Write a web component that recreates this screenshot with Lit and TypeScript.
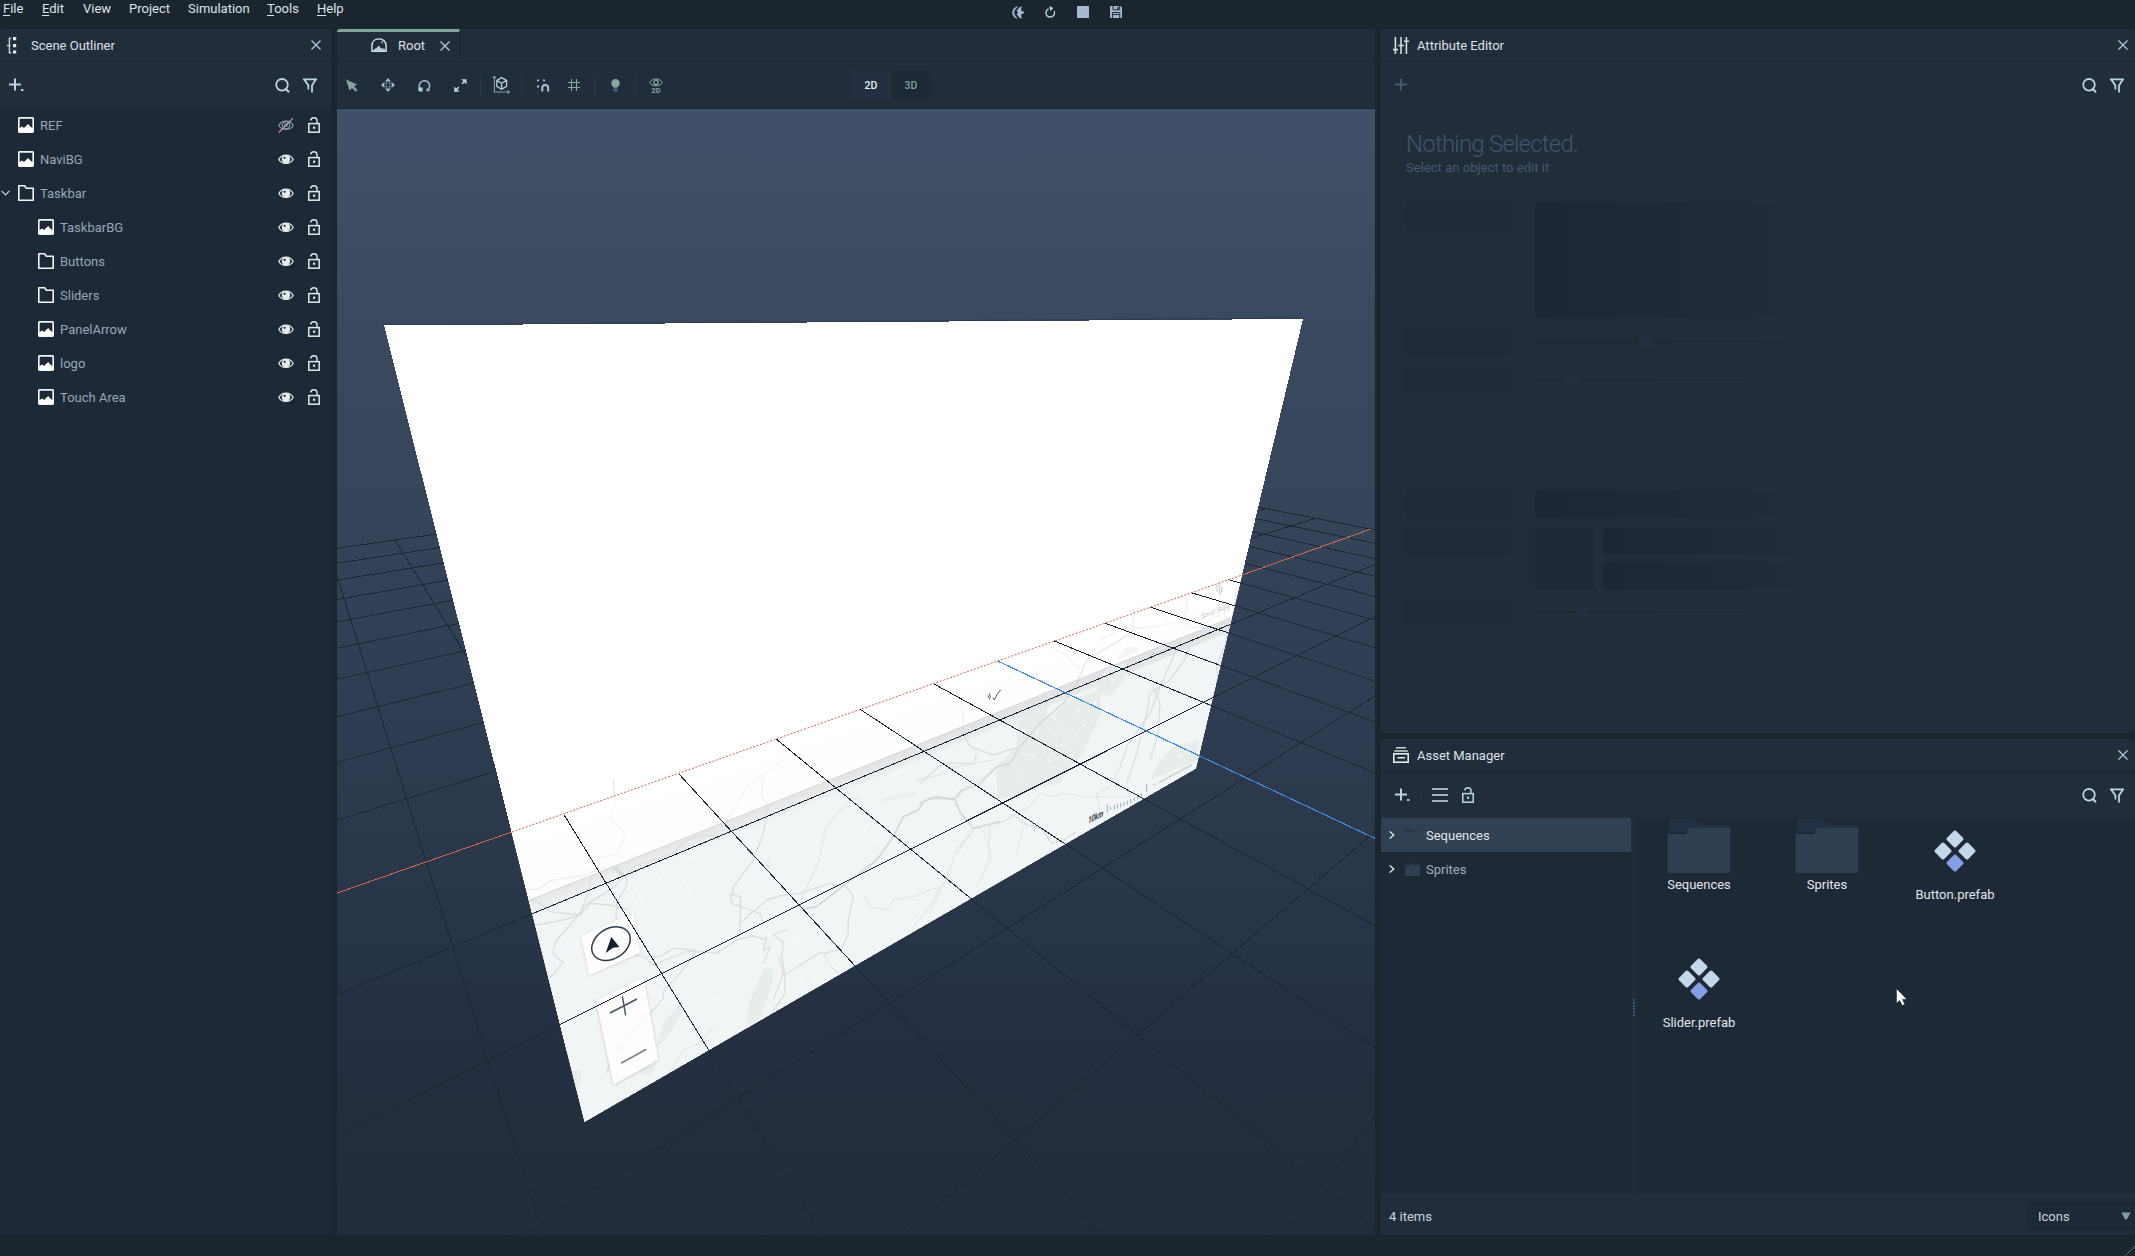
import { LitElement, html, svg, css, nothing } from "lit";
import { customElement, property } from "lit/decorators.js";

/* ---------- icons ---------- */

const icon = (w: number, h: number, body: unknown, box = `0 0 ${w} ${h}`) =>
  html`<svg class="ico" width=${w} height=${h} viewBox=${box} fill="none">${body}</svg>`;

const closeIcon = () =>
  icon(10, 10, svg`<path d="M.5 .5 9.5 9.5M9.5 .5 .5 9.5" stroke="#b3c4dc" stroke-width="1.3"/>`);

const searchIcon = () =>
  icon(15, 15, svg`<circle cx="7" cy="6.8" r="5.8" stroke="#bcd4e6" stroke-width="1.8"/>
    <path d="M10.2 10.2 14 14.2" stroke="#bcd4e6" stroke-width="2"/>`);

const filterIcon = () =>
  icon(14, 15, svg`<path d="M0 1.3H14M1.2 1.5 5.4 7.4V11.5M12.8 1.5 9 7.4V14.5" stroke="#bcd4e6" stroke-width="1.8"/>`);

const plusIcon = (color: string, dot: boolean) =>
  icon(15, 14, svg`<path d="M0 6.5H12M6 .5V12.5" stroke=${color} stroke-width="2"/>
    ${dot ? svg`<path d="M12 11h2.4v2H12z" fill=${color}/>` : nothing}`);

const imageIcon = () =>
  icon(16, 16, svg`<rect x=".8" y=".8" width="14.4" height="14.4" rx="1" stroke="#f2f6f4" stroke-width="1.7"/>
    <path d="M1 11.5 4 9.5 6 11 10.2 7 12.3 9.5 15 11.5V15H1z" fill="#fff"/>`);

const folderIcon = () =>
  icon(16, 16, svg`<path d="M.8 15.2V.8H6.6L8.4 3.3H15.2V15.2z" stroke="#f2f6f4" stroke-width="1.6" stroke-linejoin="round"/>`);

const eyeIcon = (off: boolean) => {
  const c = off ? "#8798b3" : "#e6ece9";
  return icon(16, 15, svg`<path d="M.8 7.5C3.5 1.7 12.5 1.7 15.2 7.5 12.5 12.6 3.5 12.6 .8 7.5Z" stroke=${c} stroke-width="1.2"/>
    <circle cx="8" cy="7.2" r="3.6" fill=${off ? "none" : c} stroke=${c} stroke-width="1.2"/>
    ${off
      ? svg`<circle cx="8" cy="7.2" r="1.4" stroke=${c}/><path d="M.8 14.4 14.8 .4" stroke="#cf9d92" stroke-width="1.3"/>`
      : svg`<circle cx="6.6" cy="5.8" r="1.1" fill="#1e2938"/>`}`);
};

const lockIcon = (color = "#dfeae5") =>
  icon(12, 16, svg`<rect x=".8" y="6.6" width="10.4" height="8.6" stroke=${color} stroke-width="1.5"/>
    <path d="M2.6 3.4C3 1.6 4.2 .8 6 .8 8 .8 9 1.9 9 3.6V6.4" stroke=${color} stroke-width="1.4"/>
    <rect x="5" y="9.6" width="2.2" height="2.2" fill=${color}/>`);

const chevronIcon = (dir: "down" | "right") =>
  dir === "down"
    ? icon(9, 6, svg`<path d="M.6 .8 4.5 4.8 8.4 .8" stroke="#c9dbe0" stroke-width="1.2"/>`)
    : icon(6, 8, svg`<path d="M.7 .4 4.8 4 .7 7.6" stroke="#dce8ea" stroke-width="1.3"/>`);

const outlinerIcon = () =>
  icon(10, 17, svg`<path d="M4.2 1.2H2.4V15.8H4.2M0 8.5H3.4" stroke="#c4d6cf" stroke-width="1.4"/>
    <path d="M6 0h3.2v3.2H6zM6 7h3.2v3.2H6zM6 13.4h3.2v3.2H6z" fill="#e3ebe8"/>`);

const slidersIcon = () =>
  icon(16, 17, svg`<path d="M2.4 0V17M8 0V17M13.4 0V17" stroke="#d3dfdc" stroke-width="1.6"/>
    <path d="M0 12.6H5M5.4 8.5H10.8M11 4.2H16" stroke="#d3dfdc" stroke-width="1.6"/>`);

const archiveIcon = () =>
  icon(16, 16, svg`<path d="M3 .8H13M1.2 4H14.8" stroke="#c9d9d2" stroke-width="1.5"/>
    <rect x=".8" y="6.8" width="14.4" height="8.4" stroke="#e3ece8" stroke-width="1.6"/>
    <path d="M4.4 10.8H12" stroke="#e3ece8" stroke-width="1.5"/>`);

const domeIcon = () =>
  icon(16, 15, svg`<path d="M.9 13.4V8C.9 3.6 4 .9 8 .9S15.1 3.6 15.1 8V13.4Z" stroke="#dce8ea" stroke-width="1.4" stroke-linejoin="round"/>
    <path d="M2 12.4 4 10.6 5.4 10 8 7.4 9.6 10 14 11V13.4H2z" fill="#b9c8e2"/>
    <circle cx="11" cy="4.3" r="1" fill="#a8c0bb"/>`);

const menuLinesIcon = () =>
  icon(16, 14, svg`<path d="M0 1H16M0 7H16M0 13H16" stroke="#cadce4" stroke-width="1.5"/>`);

const tools = {
  pointer: icon(12, 13, svg`<path d="M0 .6 11 5.4 8 7.4 11.6 11 9.6 12.8 6 9 3.6 11.6z" fill="#84a59c"/>`),
  move: icon(14, 14, svg`<path d="M7 0 10 3.4H4zM7 14 4 10.6H10zM0 7 3.4 4V10zM14 7 10.6 10V4z" fill="#9cc0d0"/>
    <path d="M4.6 4.6h1.6v1.6H4.6zM7.8 4.6h1.6v1.6H7.8zM4.6 7.8h1.6v1.6H4.6zM7.8 7.8h1.6v1.6H7.8z" fill="#8199bd"/>`),
  rotate: icon(13, 13, svg`<path d="M2.6 10.4A5.2 5.2 0 1 1 9.8 10.9" stroke="#9db9cf" stroke-width="1.6"/>
    <path d="M0 8.4H4.6V12.6H.8z" fill="#9fd0e0"/><path d="M8.4 9.8H11.4V12.2H8.4z" fill="#9db9cf"/>`),
  scale: icon(13, 13, svg`<path d="M12.6 .2V5.6L7.2 .2zM.2 7.4V12.8H5.6z" fill="#b4d4dc"/>
    <path d="M11.6 1.2 8 4.8M.9 12 4.8 8.1" stroke="#b4d4dc" stroke-width="1.6"/>`),
  space: icon(18, 18, svg`<path d="M2.4 0V16H17M.6 2 2.4 .4 4 2M15.6 14.4 17.4 16 15.6 17.6" stroke="#7f9f9c" stroke-width="1.1"/>
    <path d="M9.6 1.6 14.6 4.4V10.4L9.6 13.2 4.8 10.4V4.4zM4.8 4.4 9.6 7.2 14.6 4.4M9.6 7.2V13" stroke="#b6cfde" stroke-width="1.3"/>`),
  magnet: icon(13, 13, svg`<path d="M0 .4h2v1.8H0zM6 .4h2v1.8H6zM0 6.6h2v1.8H0z" fill="#b2c3e0"/>
    <path d="M5.3 12.4V8.8C5.3 6.9 6.4 5.9 8.2 5.9S11.2 6.9 11.2 8.8V12.4" stroke="#afc0da" stroke-width="2"/>`),
  grid: icon(12, 12, svg`<path d="M3.5 0V12M8.5 0V12M0 3.5H12M0 8.5H12" stroke="#86a6a2" stroke-width="1.1"/>`),
  bulb: icon(9, 13, svg`<circle cx="4.5" cy="4.3" r="4.2" fill="#84a8a0"/><path d="M2.6 8.4h3.8v.8H2.6z" fill="#84a8a0"/>
    <path d="M2.4 10H6.6V11.6L5.6 12.8H3.4L2.4 11.6z" fill="#41608c"/>`),
  eye2d: html`<span class="eye2d">${icon(14, 9, svg`<path d="M.7 4.5C3.2 -.2 10.8 -.2 13.3 4.5 10.8 8.9 3.2 8.9 .7 4.5Z" stroke="#86a6a2"/>
    <circle cx="7" cy="4.4" r="2.2" stroke="#86a6a2" stroke-width="1.2"/>`)}<b>2D</b></span>`,
};

/* ---------- viewport scene ---------- */

/** Ground plane cell (i, j) to screen pixels; w is the homogeneous depth. */
const depth = (i: number, j: number) => 1 + 0.06128 * i - 0.08345 * j;
const project = (i: number, j: number): string => {
  const w = depth(i, j);
  const x = (997.6 + 121.31 * i - 21.26 * j) / w;
  const y = (661 + 19.22 * i - 26.02 * j) / w;
  return `${x.toFixed(1)} ${y.toFixed(1)}`;
};
const NEAR = 0.1;
const HALF = 10;

function gridPath(jMin: number): string {
  const parts: string[] = [];
  for (let i = -HALF; i <= HALF; i++) {
    if (i === 0) continue;
    const jMax = Math.min(HALF, (1 + 0.06128 * i - NEAR) / 0.08345);
    if (jMax > jMin) parts.push(`M${project(i, jMin)}L${project(i, jMax)}`);
  }
  for (let j = Math.max(jMin, -HALF); j <= HALF; j++) {
    if (j === 0) continue;
    const iMin = Math.max(-HALF, (NEAR - 1 + 0.08345 * j) / 0.06128);
    parts.push(`M${project(iMin, j)}L${project(HALF, j)}`);
  }
  return parts.join("");
}

const PLANE = "384,325.5 1303,319 1196,768.5 584.5,1122";

@customElement("scene-view")
export class SceneView extends LitElement {
  static styles = css`
    :host { display: block; flex: 1; min-height: 0; overflow: hidden; }
    svg { display: block; width: 100%; height: 100%; }
    text { font-family: Roboto, "Liberation Sans", sans-serif; }
  `;

  render() {
    return html`<svg viewBox="337 109 1038 1126" preserveAspectRatio="xMinYMin slice" fill="none">
      <defs>
        <linearGradient id="sky" x1="0" y1="109" x2="0" y2="1235" gradientUnits="userSpaceOnUse">
          <stop offset="0" stop-color="#405068"/><stop offset=".17" stop-color="#3b4a60"/>
          <stop offset=".36" stop-color="#35455a"/><stop offset=".5" stop-color="#303e54"/>
          <stop offset=".68" stop-color="#2a374a"/><stop offset=".8" stop-color="#253043"/>
          <stop offset="1" stop-color="#212d3b"/>
        </linearGradient>
        <linearGradient id="fade" x1="0" y1="450" x2="0" y2="1235" gradientUnits="userSpaceOnUse">
          <stop offset="0" stop-color="#1b2733"/><stop offset=".6" stop-color="#1a2632" stop-opacity=".95"/>
          <stop offset="1" stop-color="#1a2531" stop-opacity=".65"/>
        </linearGradient>
        <linearGradient id="mist" x1="850" y1="700" x2="876" y2="775" gradientUnits="userSpaceOnUse">
          <stop offset="0" stop-color="#fff"/><stop offset="1" stop-color="#f9fbfb"/>
        </linearGradient>
        <linearGradient id="lip" x1="876" y1="762" x2="884" y2="783" gradientUnits="userSpaceOnUse">
          <stop offset="0" stop-color="#e1e3e4"/><stop offset=".5" stop-color="#ebeded"/><stop offset="1" stop-color="#f1f5f6"/>
        </linearGradient>
        <clipPath id="plane"><polygon points=${PLANE}/></clipPath>
        <clipPath id="front"><path d="M337 893 1371 529 1375 1235H337z"/></clipPath>
      </defs>
      <rect x="337" y="109" width="1038" height="1126" fill="url(#sky)"/>
      <path d=${gridPath(-HALF)} stroke="url(#fade)" stroke-width="1" shape-rendering="crispEdges"/>
      <path d="M337 893 512 832M1242 575 1371 529" stroke="#c8694f" stroke-width="1" shape-rendering="crispEdges"/>
      <path d="M383 325 1303 318" stroke="#2c3a50"/>
      <polygon points=${PLANE} fill="#fff" shape-rendering="crispEdges"/>
      <g clip-path="url(#plane)">
        <path d="M500 835 1260 568V610L500 912z" fill="url(#mist)"/>
        <path d="M500 912 880 760 1260 606V1150H500z" fill="#f1f5f6"/>
        <path d="M500 912 880 760 1260 606V619L880 776 500 928z" fill="url(#lip)"/>
        <g transform="translate(500 760) scale(.33333)" stroke="#dcdddd" stroke-width="4" stroke-linejoin="round">
          <g fill="#e6edec" stroke="none">
            <path d="M735 800 750 720 795 620 822 625 815 680 780 775z"/>
            <path d="M470 860 490 790 540 730 545 760 500 835z"/>
            <path d="M330 320 350 320 385 352 370 352z" fill="#d5dfdd"/>
            <path d="M215 930 245 930 240 975 225 985zM420 930 470 910 455 945 430 945z"/>
            <path d="M790 320 805 290 815 320 800 330zM1130 120 1240 95 1250 105 1150 125z" opacity=".7"/>
          </g>
          <g stroke="#f9fafa" stroke-width="6">
            <path d="M415 400 430 440M560 370 575 415M485 320 490 345M840 85 850 105M1160 60 1220 25M907 650 909 670M942 650 944 668M1100 190 1094 215M205 770 222 790M880 545 900 530M560 295 590 285M1110 245 1140 245M350 240 380 225M450 150 470 146M740 800 760 790M630 720 660 710"/>
          </g>
          <path d="M85 388 110 388 150 362 240 348 310 325 350 322 378 350 382 372 350 430 348 480"/>
          <path d="M85 418 120 430 150 455 240 465 270 430 330 435 385 450M110 495 190 480 240 465 250 440 345 380 400 320 520 280 560 240 600 228 640 225"/>
          <path d="M275 350 265 400 240 460 170 540 158 575 165 590 190 605 150 655"/>
          <path d="M340 60 345 130 332 180 360 200 375 228 345 285 300 290 295 330" opacity=".7"/>
          <path d="M385 580 430 590 460 615 520 590 560 575 600 575 650 580 710 540 760 528 800 540"/>
          <path d="M440 590 480 590 520 565 580 570 590 575 540 640 490 695 490 715 455 755 330 905 320 940"/>
          <path d="M785 110 805 140 790 220 760 300 700 380 697 405 722 410 720 520 715 530"/>
          <path d="M690 400 695 430 780 460 790 490"/>
          <path d="M720 490 800 420 850 405 900 400 990 370 1040 380 1060 410 1045 480 1045 520 1025 565 975 580 960 577 855 645"/>
          <path d="M900 450 950 440 1040 370 1130 300 1180 230 1210 170 1255 150 1270 125 1310 110 1365 120 1380 155 1420 205 1460 195 1500 185" stroke="#d5d6d6" stroke-width="5"/>
          <path d="M860 510 820 525 850 545 845 590 855 645 855 700 815 760M800 530 790 570 810 560 790 610M835 590 850 640 820 720"/>
          <path d="M975 580 980 605 1020 645M640 800 600 850 550 870 510 935M1090 400 1110 440 1165 450 1180 420 1240 410 1320 380 1290 440 1240 500" opacity=".6"/>
          <path d="M1075 110 1010 160 975 210 958 300 925 370 900 430M1410 220 1370 270 1340 350 1290 460M1450 210 1475 290 1430 380" opacity=".6"/>
          <path d="M850 0 740 80 700 150 670 190M790 50 785 110M1250 60 1320 45 1370 20 1480 0M1365 120 1400 80 1460 50 1490 20" opacity=".6"/>
        </g>
        <g transform="translate(920 500) scale(.33333)" stroke="#dcdddd" stroke-width="4" stroke-linejoin="round">
          <g fill="#e6edeb" stroke="none">
            <path d="M232 900 230 800 290 740 295 660 330 640 380 610 380 660 450 600 540 570 545 640 515 700 490 760 440 810 420 850 330 870z"/>
            <path d="M530 570 560 500 620 490 610 540 570 590zM590 480 620 440 660 440 650 455z"/>
            <path d="M690 840 720 780 760 740 835 720 835 780 760 810z"/>
          </g>
          <g stroke="#f2f6f6" stroke-width="7">
            <path d="M398 646 408 664M472 626 479 642M332 763 342 772M432 725 438 738M382 774 390 786M302 824 305 833M452 684 460 690M350 690 352 705M402 702 408 712M522 605 528 616M572 534 578 543M372 833 380 838M452 763 460 768M780 760 786 770M350 725 356 730M420 680 426 690M490 670 494 680M470 720 476 728M310 690 316 698"/>
          </g>
          <path d="M0 910 30 895 105 895 125 870 175 855 230 800 270 790 300 740 360 670 435 605 470 550 500 480 600 420 640 390" stroke="#d8d9d9" stroke-width="5"/>
          <path d="M105 895 120 940 160 985 250 965 280 945 320 975 365 985 395 1030 430 1020 470 995"/>
          <path d="M540 420 600 390 700 380 780 365 830 385 870 360 930 330M640 330 640 390 690 380M800 290 800 330 790 360" opacity=".8"/>
          <path d="M820 400 800 470 750 540 690 580 680 640 650 760 620 850M780 410 760 470 720 560 690 640 620 740 600 800M700 560 720 610 715 700 690 780"/>
          <path d="M910 300 920 420 890 500 895 560M950 260 940 330M130 640 130 700 150 740 220 765 300 740M170 760 160 790 70 790 0 850"/>
          <path d="M360 880 400 890 430 880 490 890 620 890M540 940 530 880 570 860 600 800M360 880 330 920 280 945M110 560 130 640M480 510 430 460 370 430M260 480 270 520" opacity=".6"/>
          <path d="M210 970 205 1080M310 980 290 1060 M160 990 110 1060" opacity=".6"/>
        </g>
        <path d="M500 835 1260 568V606L880 760 500 912z" fill="#fff" opacity=".5"/>
        <path d="M500 912 880 760 1260 606" stroke="#cfd1d1" stroke-width=".8"/>
        <g transform="translate(920 500) scale(.33333)">
          <path d="M203 586 210 598M208 580 212 592M219 593 223 600 231 583 242 570" stroke="#4f565c" stroke-width="3"/>
          <path d="M892 255 890 270M900 250 898 285M906 262 904 280M890 274 900 268" stroke="#a3adab" stroke-width="3" stroke-dasharray="5 3"/>
          <path d="M562 914 562 938M572 920V930M583 916V930M592 912V926M602 908V922M612 906V918M622 902V914M632 898V910M643 892V904M653 886V898M664 880V892M680 852V874" stroke="#9aabc4" stroke-width="3"/>
          <path d="M700 855 708 851M715 848 815 795" stroke="#9fb0ad" stroke-width="6" stroke-dasharray="3 2" opacity=".65"/>
          <text x="0" y="0" transform="matrix(1 -.5 -.12 1 503 972)" font-size="30" font-weight="700" fill="#3a4047" textLength="46" lengthAdjust="spacingAndGlyphs">10km</text>
          <text x="0" y="0" transform="matrix(1 -.4 -.12 1 842 358)" font-size="22" fill="#c3c8c8" textLength="88" lengthAdjust="spacingAndGlyphs">Sand Skog</text>
        </g>
        <g transform="translate(500 760) scale(.33333)">
          <path d="M243 528 402 458 421 578 268 645z" fill="#fdfdfd" style="filter:drop-shadow(0 2px 4px #0002)"/>
          <ellipse cx="0" cy="0" rx="62" ry="45" transform="translate(333 551) rotate(-32)" stroke="#2a3949" stroke-width="4.5"/>
          <path d="M334 531 358 561 339 563 317 579z" fill="#131e2c"/>
          <path d="M288 722 431 652 475 899 341 974z" fill="#fdfdfd" style="filter:drop-shadow(0 2px 4px #0003)"/>
          <path d="M330 759 411 717M367 709 377 766" stroke="#475563" stroke-width="4.5"/>
          <path d="M363 910 439 868" stroke="#7c8084" stroke-width="5"/>
          <path d="M340 890 440 760" stroke="#f0f1f1" stroke-width="3"/>
        </g>
        <g clip-path="url(#front)">
          <path d=${gridPath(0)} stroke="#172133" stroke-width="1" shape-rendering="crispEdges"/>
        </g>
      </g>
      <path d="M512 832 1242 575" stroke="#c8694f" stroke-width="1" stroke-dasharray="2 1.6"/>
      <path d="M${project(0, 0)}L${project(0, 4.2)}" stroke="#4688d8" stroke-width="1.2" shape-rendering="crispEdges"/>
    </svg>`;
  }
}

/* ---------- outliner ---------- */

interface Node { name: string; kind: "image" | "folder"; level: number; open?: boolean; hidden?: boolean }

const NODES: Node[] = [
  { name: "REF", kind: "image", level: 0, hidden: true },
  { name: "NaviBG", kind: "image", level: 0 },
  { name: "Taskbar", kind: "folder", level: 0, open: true },
  { name: "TaskbarBG", kind: "image", level: 1 },
  { name: "Buttons", kind: "folder", level: 1 },
  { name: "Sliders", kind: "folder", level: 1 },
  { name: "PanelArrow", kind: "image", level: 1 },
  { name: "logo", kind: "image", level: 1 },
  { name: "Touch Area", kind: "image", level: 1 },
];

const shared = css`
  * { box-sizing: border-box; }
  .ico { display: block; flex: none; }
  .panel { display: flex; flex-direction: column; min-height: 0; min-width: 0; background: #222d3c; border-radius: 3px; overflow: hidden; }
  .head { flex: none; height: 33px; display: flex; align-items: center; border-bottom: 1px solid #1c2733; color: #dde3ea; }
  .head > span { padding-top: 2px; }
  .bar { flex: none; height: 46px; display: flex; align-items: center; padding-bottom: 1px; }
  .grow { flex: 1; }
`;

@customElement("scene-outliner")
export class SceneOutliner extends LitElement {
  static styles = [shared, css`
    :host { display: flex; }
    .panel { flex: 1; }
    .head { padding: 0 10px 0 7px; }
    .head span { margin-left: 14px; }
    .bar { padding: 0 14px 0 9px; gap: 14px; }
    .bar .ico:last-child { margin-left: -1px; }
    .tree { flex: 1; background: #1e2938; }
    .row { height: 34px; display: flex; align-items: center; padding-right: 11px; color: #98a7b7; }
    .row.l1 { padding-left: 20px; }
    .twist { width: 18px; padding-left: 1px; }
    .name { flex: 1; margin-left: 6px; padding-top: 2px; }
    .lock { margin-left: 14px; }
  `];
  render() {
    return html`<section class="panel">
      <header class="head">${outlinerIcon()}<span>Scene Outliner</span><i class="grow"></i>${closeIcon()}</header>
      <div class="bar">${plusIcon("#bcd4e6", true)}<i class="grow"></i>${searchIcon()}${filterIcon()}</div>
      <div class="tree">
        ${NODES.map(n => html`<div class="row l${n.level}">
          <div class="twist">${n.open ? chevronIcon("down") : nothing}</div>
          ${n.kind === "image" ? imageIcon() : folderIcon()}
          <div class="name">${n.name}</div>
          ${eyeIcon(!!n.hidden)}<div class="lock">${lockIcon()}</div>
        </div>`)}
      </div>
    </section>`;
  }
}

/* ---------- attribute editor ---------- */

@customElement("attribute-editor")
export class AttributeEditor extends LitElement {
  static styles = [shared, css`
    :host { display: flex; }
    .panel { flex: 1; }
    .head { padding: 0 7px 0 12px; }
    .head span { margin-left: 8px; }
    .bar { padding: 0 11px 0 14px; gap: 13px; }
    .body { padding: 21px 25px 0; }
    h1 { margin: 0; font-size: 24px; line-height: 30px; font-weight: 300; color: #42536b; letter-spacing: -.78px; }
    p { margin: 0; font-size: 13px; line-height: 18px; color: #46576f; letter-spacing: .03px; }
    .ghost { display: grid; grid-template-columns: 106px 277px; column-gap: 23px; margin-top: 25px; }
    .ghost > * { margin-bottom: 10px; }
    .label { height: 28px; background: #20293a; border-radius: 2px; }
    .block { height: 28px; border-radius: 2px; background: linear-gradient(90deg, #1c2734, #1e2938 45%, #202a3a 78%, #222d3c); }
    .tall { height: 116px; }
    .slider { height: 28px; display: flex; align-items: center; }
    .slider i { height: 2px; background: #1d2835; }
    .slider b { width: 14px; height: 14px; border-radius: 7px; background: #252f42; }
    .slider em { flex: 1; height: 2px; background: linear-gradient(90deg, #1d2835, #1f2a39 60%, #222d3c); }
    .gap { grid-column: 1 / 3; height: 76px; }
    .pair { height: 60px; display: grid; grid-template-columns: 59px 1fr; grid-template-rows: 27px 27px; gap: 7px 9px; }
    .pair .block { height: 27px; }
    .pair .sq { grid-row: 1 / 3; height: 61px; background: #1d2835; }
  `];
  private slider(at: number) {
    return html`<div class="slider"><i style="width:${at}px"></i><b></b><em></em></div>`;
  }
  render() {
    return html`<section class="panel">
      <header class="head">${slidersIcon()}<span>Attribute Editor</span><i class="grow"></i>${closeIcon()}</header>
      <div class="bar">${plusIcon("#3e5878", false)}<i class="grow"></i>${searchIcon()}${filterIcon()}</div>
      <div class="body">
        <h1>Nothing Selected.</h1>
        <p>Select an object to edit it</p>
        <div class="ghost">
          <div class="label"></div><div class="block tall"></div>
          <div class="label"></div>${this.slider(104)}
          <div class="label"></div>${this.slider(31)}
          <div class="gap"></div>
          <div class="label"></div><div class="block"></div>
          <div class="label"></div><div class="pair"><div class="block sq"></div><div class="block"></div><div class="block"></div></div>
          <div class="label"></div>${this.slider(40)}
        </div>
      </div>
    </section>`;
  }
}

/* ---------- asset manager ---------- */

const bigFolder = () => icon(64, 55, svg`<path d="M3 1H28L32 7H61.5V14H3z" fill="#253145"/>
  <path d="M0.5 16H19L23 10H63.5V53Q63.5 55 61.5 55H2.5Q.5 55 .5 53z" fill="#313f53"/>`);

const prefab = () => icon(42, 42, svg`
  ${[[21, 9, "#c3d8ea"], [9, 21, "#c3d8ea"], [33, 21, "#c3d8ea"], [21, 33, "#86a0e6"]].map(([x, y, c]) =>
    svg`<rect x="-6.5" y="-6.5" width="13" height="13" rx="1.8" transform="translate(${x} ${y}) rotate(45)" fill=${c}/>`)}`);

@customElement("asset-manager")
export class AssetManager extends LitElement {
  static styles = [shared, css`
    :host { display: flex; }
    .panel { flex: 1; position: relative; }
    .head { padding: 0 7px 0 12px; }
    .head span { margin-left: 8px; }
    .bar { padding: 0 11px 0 14px; gap: 14px; }
    .bar .ico:last-child { margin-left: -1px; }
    .sep { width: 1px; height: 16px; background: #28354a; margin: 0 -3px 0 -4px; }
    .main { flex: 1; min-height: 0; display: flex; }
    .tree { width: 250px; background: #1e2938; }
    .row { height: 34px; display: flex; align-items: center; padding-left: 8px; color: #a3adb9; }
    .row.on { background: #314053; color: #e1e5ea; }
    .row .mini { margin: 0 6px 0 10px; }
    .row span { padding-top: 2px; }
    .split { width: 4px; display: flex; flex-direction: column; align-items: flex-end; padding-top: 181px; gap: 1px; }
    .split i { width: 2px; height: 2px; background: #3c567d; }
    .files { flex: 1; background: #1e2938; display: grid; grid-template-columns: repeat(3, 128px); grid-auto-rows: 128px; align-content: start; color: #e1e5ea; }
    .file { display: flex; flex-direction: column; align-items: center; }
    .file span { line-height: 16px; margin-top: 4px; }
    .file.prefab { padding-top: 12px; }
    .file.prefab span { margin-top: 15px; }
    .foot { flex: none; height: 42px; display: flex; align-items: center; padding: 4px 0 0 8px; color: #ccd5de; }
    .foot span { padding-top: 2px; }
    .drop { width: 109px; height: 30px; background: #1e2938; border-radius: 3px; display: flex; align-items: center; justify-content: space-between; padding: 0 4px 0 12px; }
    .cursor { position: absolute; left: 514px; top: 248px; }
  `];
  render() {
    const file = (name: string, kind: "folder" | "prefab") =>
      html`<div class="file ${kind}">${kind === "folder" ? bigFolder() : prefab()}<span>${name}</span></div>`;
    return html`<section class="panel">
      <header class="head">${archiveIcon()}<span>Asset Manager</span><i class="grow"></i>${closeIcon()}</header>
      <div class="bar">${plusIcon("#bcd4e6", true)}<i class="sep"></i>${menuLinesIcon()}${lockIcon("#bcd8dc")}<i class="grow"></i>${searchIcon()}${filterIcon()}</div>
      <div class="main">
        <div class="tree">
          <div class="row on">${chevronIcon("right")}<div class="mini">${icon(15, 13, svg`<path d="M0 0H6L7.5 1.4H14.5V2.6H5L4.6 3.6H.5z" fill="#28354a"/>`)}</div><span>Sequences</span></div>
          <div class="row">${chevronIcon("right")}<div class="mini">${icon(15, 13, svg`<path d="M.5 0H6.5L7.5 1.4H14.5V3H.5z" fill="#253145"/><path d="M0 3.6H5L6 2.2H15V13H0z" fill="#313f53"/>`)}</div><span>Sprites</span></div>
        </div>
        <div class="split">${[0, 1, 2, 3, 4, 5].map(() => html`<i></i>`)}</div>
        <div class="files">
          ${file("Sequences", "folder")}${file("Sprites", "folder")}${file("Button.prefab", "prefab")}${file("Slider.prefab", "prefab")}
        </div>
      </div>
      <footer class="foot"><span>4 items</span><i class="grow"></i>
        <div class="drop"><span>Icons</span>${icon(10, 8, svg`<path d="M.4 .4H9.6L5.8 7.6H4.2z" fill="#7fa19b"/>`)}</div>
      </footer>
      <div class="cursor">${icon(13, 20, svg`<path d="M1.4 1.4V16.4L4.6 13.6 7.2 18.6 9.8 17.4 7.6 12.4H12z" fill="#fff" stroke="#10161d" stroke-width=".6"/>`)}</div>
    </section>`;
  }
}

/* ---------- shell ---------- */

@customElement("app-root")
export class AppRoot extends LitElement {
  @property({ type: Array }) menu: [string, boolean][] = [
    ["File", true], ["Edit", true], ["View", false], ["Project", false], ["Simulation", false], ["Tools", true], ["Help", true],
  ];

  static styles = [shared, css`
    :host { display: flex; flex-direction: column; width: 100vw; height: 100vh; overflow: hidden; background: #1b252e;
      font: 13px/16px Roboto, "Liberation Sans", sans-serif; color: #dde3ea; }
    .menubar { flex: none; height: 29px; display: flex; align-items: flex-start; }
    .menus { display: grid; grid-template-columns: 39px 41px 46px 59px 79px 50px 40px; padding: 1px 0 0 3px; width: 1010px; }
    .menus u { text-underline-offset: 2px; }
    .play { display: flex; align-items: center; height: 23px; padding-top: 1px; }
    .play svg + svg { margin-left: 21px; }
    .play svg:nth-child(3) { margin-left: 22px; }
    .work { flex: 1; min-height: 0; display: grid; grid-template-columns: 331px 1038px 754px; gap: 6px; }
    .tab { width: 123px; height: 32px; border-top: 3px solid #84a59c; border-right: 1px solid #1b2531; display: flex; align-items: center; padding: 0 9px 2px 34px; }
    .tab span { flex: 1; margin-left: 11px; padding-top: 1px; }
    .bar.tools { padding: 0 0 0 9px; border-bottom: 1px solid #1a2533; height: 47px; }
    .cell { flex: none; display: flex; justify-content: center; width: 36px; }
    .cell.first { width: 12px; margin-right: 12px; }
    .cell.wide { width: 40px; }
    .cell.snap { width: 34px; margin-left: 4px; }
    .cell.mesh { width: 28px; margin-right: 6px; }
    .cell.end { margin-right: 2px; }
    .sep { flex: none; width: 1px; height: 21px; background: #2c3a4c; }
    .eye2d { display: flex; flex-direction: column; align-items: center; padding-top: 2px; }
    .eye2d b { font: 700 7.5px/7px Roboto, sans-serif; color: #86a6a2; }
    .toggle { flex: none; display: flex; margin-left: 175px; font-size: 10.5px; font-weight: 500; border-radius: 4px; overflow: hidden; }
    .toggle div { width: 40px; height: 30px; line-height: 31px; text-align: center; }
    .toggle .on { background: #242f42; color: #e8edf5; }
    .toggle .off { background: #1e2938; color: #7fa3a3; }
    .side { display: grid; grid-template-rows: 704px 1fr; gap: 6px; min-height: 0; }
    .status { flex: none; height: 21px; display: flex; justify-content: flex-end; align-items: flex-end; }
  `];

  render() {
    const cell = (t: unknown, kind = "") => html`<div class="cell ${kind}">${t}</div>`;
    const sep = html`<i class="sep"></i>`;
    return html`
      <nav class="menubar">
        <div class="menus">${this.menu.map(([m, mark]) => html`<span>${mark ? html`<u>${m[0]}</u>${m.slice(1)}` : m}</span>`)}</div>
        <div class="play">
          ${icon(14, 13, svg`<path d="M7.6 .7A6 6 0 0 0 7 12.4L4.9 9.4A4.6 4.6 0 0 1 4.9 3.6z" fill="#a9bad2" stroke="#a9bad2" stroke-width=".6"/>
            <path d="M11.6 0 9.4 1.4 6.6 5 8.2 6.5 6.6 8 9.4 11.6 11.6 13 11.2 9.2 12 7.6H14V5.4H12L11.2 3.8z" fill="#a9bad2"/>`)}
          ${icon(10, 12, svg`<path d="M3.6 2.8A4.3 4.3 0 1 0 9.2 5" stroke="#b8dbe2" stroke-width="1.4"/><path d="M4.2 0 8.4 2 5.4 5z" fill="#b8dbe2"/>`)}
          ${icon(12, 12, svg`<rect width="12" height="12" rx=".6" fill="#a9b8d2"/>`)}
          ${icon(12, 12, svg`<path d="M0 0H10.4L12 1.6V12H0z" fill="#a9b8d2"/><path d="M3 0V3.8H9.6V0M2.4 12V6.6H9.8V12M3 8.6H9" stroke="#1b252e"/><path d="M7 1h1.4v2H7z" fill="#1b252e"/>`)}
        </div>
      </nav>
      <div class="work">
        <scene-outliner></scene-outliner>
        <section class="panel">
          <div class="head"><div class="tab">${domeIcon()}<span>Root</span>${closeIcon()}</div></div>
          <div class="bar tools">
            ${cell(tools.pointer, "first")}${cell(tools.move)}${cell(tools.rotate)}${cell(tools.scale, "end")}${sep}
            ${cell(tools.space, "wide")}${sep}${cell(tools.magnet, "snap")}${cell(tools.grid, "mesh")}${sep}
            ${cell(tools.bulb, "wide")}${sep}${cell(tools.eye2d, "wide")}
            <div class="toggle"><div class="on">2D</div><div class="off">3D</div></div>
          </div>
          <scene-view></scene-view>
        </section>
        <div class="side">
          <attribute-editor></attribute-editor>
          <asset-manager></asset-manager>
        </div>
      </div>
      <footer class="status">${icon(12, 12, svg`<path d="M2 12 12 2" stroke="#5a6c86"/>`)}</footer>
    `;
  }
}
